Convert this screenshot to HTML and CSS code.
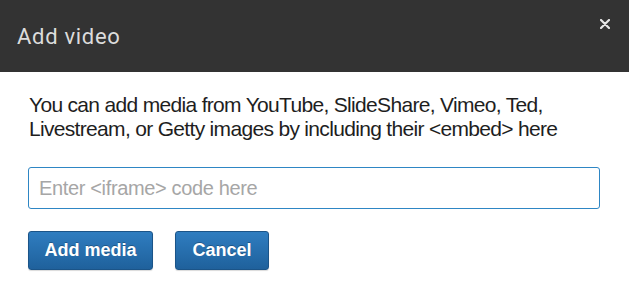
FILE: index.html
```html
<!DOCTYPE html>
<html>
<head>
<meta charset="utf-8">
<link rel="stylesheet" href="styles.css">
</head>
<body>
<div class="dialog">
  <div class="header">
    <h1 class="title">Add video</h1>
    <button class="close" aria-label="Close">
      <svg width="10" height="10" viewBox="0 0 10 10"><path d="M1 1 L9 9 M9 1 L1 9" stroke="#e6e6e6" stroke-width="2.2" stroke-linecap="round"/></svg>
    </button>
  </div>
  <div class="body">
    <p class="desc">You can add media from YouTube, SlideShare, Vimeo, Ted,<br>Livestream, or Getty images by including their &lt;embed&gt; here</p>
    <input class="code" type="text" placeholder="Enter &lt;iframe&gt; code here">
    <div class="actions">
      <button class="btn btn-add">Add media</button>
      <button class="btn btn-cancel">Cancel</button>
    </div>
  </div>
</div>
</body>
</html>
```
FILE: styles.css
```css
html, body { margin: 0; padding: 0; background: #fff; }
.dialog { width: 629px; height: 292px; background: #fff; }
.header {
  height: 72px;
  background: #333333;
  display: flex;
  align-items: flex-start;
  justify-content: space-between;
  padding: 0 19px 0 17px;
  box-sizing: border-box;
}
.title {
  margin: 0;
  padding-top: 25px;
  font-family: Roboto, sans-serif;
  font-weight: 400;
  font-size: 22px;
  line-height: 24px;
  letter-spacing: 0.7px;
  color: #dcdcdc;
}
.close {
  margin-top: 19px;
  padding: 0;
  border: 0;
  background: transparent;
  width: 10px;
  height: 10px;
  display: flex;
}
.body { padding: 21px 29px 0 28px; }
.desc {
  margin: 0 0 0 1px;
  font-family: "Liberation Sans", Arial, sans-serif;
  font-size: 21px;
  line-height: 24px;
  letter-spacing: -0.68px;
  color: #1e1e1e;
  white-space: nowrap;
}
.code {
  display: block;
  margin-top: 26px;
  width: 572px;
  height: 42px;
  box-sizing: border-box;
  border: 1px solid #2e86c4;
  border-radius: 3px;
  padding: 0 10px;
  font-family: "Liberation Sans", Arial, sans-serif;
  font-size: 20px;
  letter-spacing: -0.35px;
  color: #333;
  outline: none;
}
.code::placeholder { color: #a6a6a6; }
.actions { display: flex; gap: 22px; margin-top: 22px; }
.btn {
  height: 39px;
  padding: 0;
  border: 1px solid #1b5488;
  border-radius: 3px;
  background: linear-gradient(#2f7dc0, #1f619c);
  color: #fff;
  font-family: "Liberation Sans", Arial, sans-serif;
  font-weight: 700;
  font-size: 18px;
  text-shadow: 0 -1px 0 rgba(0,0,0,0.25);
  box-shadow: 0 1px 1px rgba(0,0,0,0.15);
}
.btn-add { width: 125px; }
.btn-cancel { width: 94px; }
```
